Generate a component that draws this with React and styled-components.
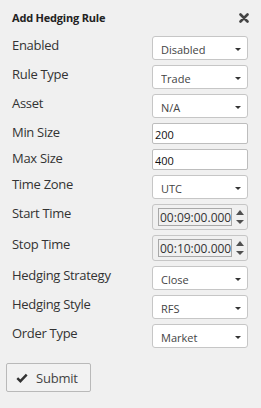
import React from "react";
import styled, { createGlobalStyle } from "styled-components";

const GlobalStyle = createGlobalStyle`
  html, body {
    margin: 0;
    padding: 0;
    background: #f0f0f0;
  }
  body {
    font-family: "Open Sans", "Liberation Sans", sans-serif;
    color: #333;
  }
`;

const Panel = styled.div`
  width: 261px;
  height: 408px;
  box-sizing: border-box;
  padding: 10px 13px 0 12px;
  background: #f0f0f0;
`;

const Header = styled.div`
  display: flex;
  justify-content: space-between;
  align-items: center;
  height: 15px;
  margin-bottom: 11px;
`;

const Title = styled.h1`
  margin: 0;
  font-size: 11px;
  font-weight: 700;
  line-height: 15px;
  letter-spacing: -0.2px;
  color: #222;
`;

const CloseButton = styled.button`
  display: flex;
  border: 0;
  background: none;
  padding: 0;
  margin-right: -1px;
  cursor: pointer;
`;

const Row = styled.div`
  display: grid;
  grid-template-columns: 140px 96px;
  align-items: start;
  margin-bottom: 5px;
`;

const Label = styled.label`
  font-size: 13px;
  line-height: 18px;
  letter-spacing: -0.3px;
  color: #333;
`;

const SelectWrap = styled.div`
  position: relative;
  height: 24px;
`;

const Select = styled.select`
  appearance: none;
  width: 100%;
  height: 24px;
  box-sizing: border-box;
  border: 1px solid #c6c6c6;
  border-radius: 3px;
  background: #fff;
  font-family: inherit;
  font-size: 11px;
  color: #444;
  padding: 3px 0 0 8px;
  outline: none;
`;

const Caret = styled.span`
  position: absolute;
  right: 7px;
  top: 12px;
  width: 0;
  height: 0;
  border-left: 3px solid transparent;
  border-right: 3px solid transparent;
  border-top: 3px solid #333;
  pointer-events: none;
`;

const TextInput = styled.input`
  width: 100%;
  height: 21px;
  box-sizing: border-box;
  border: 1px solid #bdbdbd;
  border-radius: 2px;
  background: #fff;
  font-family: inherit;
  font-size: 11px;
  color: #111;
  padding: 2px 0 0 2px;
  outline: none;
`;

const TimeBox = styled.div`
  display: flex;
  align-items: center;
  height: 26px;
  box-sizing: border-box;
  border: 1px solid #c6c6c6;
  border-radius: 3px;
  background: #f0f0f0;
  padding: 0 2px 0 5px;
`;

const TimeField = styled.input`
  width: 74px;
  height: 18px;
  box-sizing: border-box;
  border: 1px solid #a8a8a8;
  background: #f0f0f0;
  font-family: inherit;
  font-size: 12px;
  color: #333;
  padding: 1px 0 0 1px;
  outline: none;
`;

const Spinner = styled.div`
  display: flex;
  flex-direction: column;
  align-items: center;
  justify-content: space-between;
  width: 12px;
  height: 16px;
  margin-left: 3px;
  padding: 1px 0;
  box-sizing: border-box;
`;

const Arrow = styled.span`
  width: 0;
  height: 0;
  border-left: 4px solid transparent;
  border-right: 4px solid transparent;
  ${(p) =>
    p.$up
      ? "border-bottom: 5px solid #505050;"
      : "border-top: 4px solid #505050;"}
`;

const SubmitButton = styled.button`
  display: flex;
  align-items: center;
  gap: 8px;
  margin: 15px 0 0 -6px;
  height: 29px;
  width: 85px;
  box-sizing: border-box;
  padding: 0 0 0 9px;
  border: 1px solid #b9b9b9;
  border-radius: 2px;
  background: #f2f2f2;
  font-family: inherit;
  font-size: 13px;
  letter-spacing: -0.2px;
  color: #444;
  cursor: pointer;
`;

const fields = [
  { label: "Enabled", type: "select", value: "Disabled" },
  { label: "Rule Type", type: "select", value: "Trade" },
  { label: "Asset", type: "select", value: "N/A" },
  { label: "Min Size", type: "text", value: "200" },
  { label: "Max Size", type: "text", value: "400" },
  { label: "Time Zone", type: "select", value: "UTC" },
  { label: "Start Time", type: "time", value: "00:09:00.000" },
  { label: "Stop Time", type: "time", value: "00:10:00.000" },
  { label: "Hedging Strategy", type: "select", value: "Close" },
  { label: "Hedging Style", type: "select", value: "RFS" },
  { label: "Order Type", type: "select", value: "Market" },
];

function Control({ field }) {
  if (field.type === "select") {
    return (
      <SelectWrap>
        <Select defaultValue={field.value}>
          <option>{field.value}</option>
        </Select>
        <Caret />
      </SelectWrap>
    );
  }
  if (field.type === "text") {
    return <TextInput defaultValue={field.value} />;
  }
  return (
    <TimeBox>
      <TimeField defaultValue={field.value} />
      <Spinner>
        <Arrow $up />
        <Arrow />
      </Spinner>
    </TimeBox>
  );
}

function App() {
  return (
    <Panel>
      <GlobalStyle />
      <Header>
        <Title>Add Hedging Rule</Title>
        <CloseButton aria-label="Close">
          <svg width="10" height="10" viewBox="0 0 10 10">
            <path d="M1.5 1.5 L8.5 8.5 M8.5 1.5 L1.5 8.5" stroke="#444" strokeWidth="2.6" strokeLinecap="round" />
          </svg>
        </CloseButton>
      </Header>
      <form onSubmit={(e) => e.preventDefault()}>
        {fields.map((f) => (
          <Row key={f.label}>
            <Label>{f.label}</Label>
            <Control field={f} />
          </Row>
        ))}
        <SubmitButton type="submit">
          <svg width="12" height="10" viewBox="0 0 12 10">
            <path d="M1.3 5.2 L4.4 8.2 L10.7 1.6" fill="none" stroke="#333" strokeWidth="2.4" />
          </svg>
          Submit
        </SubmitButton>
      </form>
    </Panel>
  );
}

export default App;
